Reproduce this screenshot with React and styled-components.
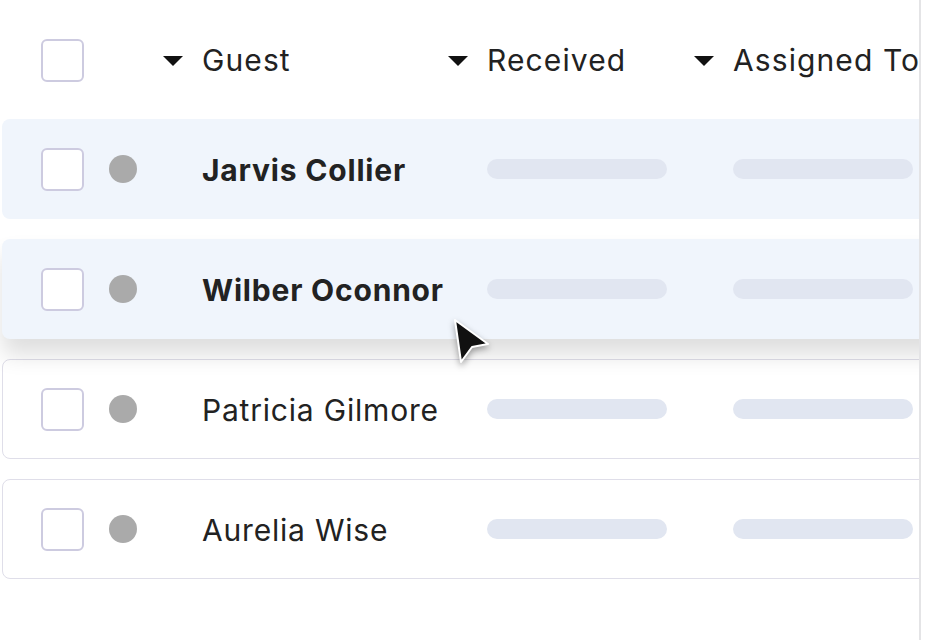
import * as React from 'react'
import styled, { createGlobalStyle } from 'styled-components'

const guests = [
    { name: 'Jarvis Collier', unread: true },
    { name: 'Wilber Oconnor', unread: true, dragging: true },
    { name: 'Patricia Gilmore' },
    { name: 'Aurelia Wise' },
]

const App = () => {
    return (
        <>
            <GlobalStyle />
            <Frame>
                <Table>
                    <HeaderRow>
                        <Checkbox />
                        <span />
                        <HeaderCell><Caret />Guest</HeaderCell>
                        <HeaderCell><Caret />Received</HeaderCell>
                        <HeaderCell><Caret />Assigned To</HeaderCell>
                    </HeaderRow>
                    {guests.map((g) => (
                        <Row key={g.name} unread={g.unread} dragging={g.dragging}>
                            <Checkbox />
                            <Dot />
                            <Name unread={g.unread}>{g.name}</Name>
                            <Skeleton />
                            <Skeleton />
                        </Row>
                    ))}
                </Table>
                <Cursor viewBox="0 0 48 56" width="48" height="56">
                    <path d="M7 6 L40 30 L24 33 L13 48 Z" fill="#111" stroke="#fff" strokeWidth="2" strokeLinejoin="round" />
                </Cursor>
            </Frame>
        </>
    )
}

export default App

const GlobalStyle = createGlobalStyle`
    body {
        margin: 0;
        background: #ffffff;
        font-family: Inter, "Noto Sans", sans-serif;
        color: #222222;
    }
`

const Frame = styled.div`
    position: relative;
    width: 921px;
    height: 640px;
    padding: 18px 0 0 2px;
    box-sizing: border-box;
    border-right: 2px solid #e4e4e6;
    overflow: hidden;
`

const Table = styled.div`
    display: flex;
    flex-direction: column;
    gap: 20px;
    width: 1040px;
`

const columns = `
    display: grid;
    grid-template-columns: 68px 93px 285px 246px 1fr;
    align-items: center;
    padding-left: 38px;
    border: 1px solid transparent;
    box-sizing: border-box;
`

const HeaderRow = styled.div`
    ${columns}
    height: 84px;
    margin-bottom: -3px;
`

const HeaderCell = styled.div`
    display: flex;
    align-items: center;
    gap: 19px;
    margin-left: -39px;
    font-size: 30px;
    font-weight: 400;
    letter-spacing: 1.1px;
    white-space: nowrap;
    color: #222222;
`

const Caret = styled.span`
    width: 0;
    height: 0;
    margin-top: 2px;
    border-left: 10px solid transparent;
    border-right: 10px solid transparent;
    border-top: 10px solid #111111;
`

const Row = styled.div`
    ${columns}
    position: relative;
    z-index: ${(p) => (p.dragging ? 2 : 1)};
    height: 100px;
    border-radius: 8px;
    background: ${(p) => (p.unread ? '#f0f5fc' : '#ffffff')};
    border-color: ${(p) => (p.unread ? 'transparent' : '#dfdee9')};
    box-shadow: ${(p) => (p.dragging ? '0 16px 22px rgba(0, 0, 0, 0.13)' : 'none')};
`

const Checkbox = styled.div`
    width: 43px;
    height: 43px;
    box-sizing: border-box;
    border: 2px solid #cdcbe0;
    border-radius: 6px;
    background: #ffffff;
`

const Dot = styled.div`
    width: 28px;
    height: 28px;
    border-radius: 50%;
    background: #aaaaaa;
`

const Name = styled.div`
    padding-top: 2px;
    font-size: 30px;
    font-weight: ${(p) => (p.unread ? 700 : 400)};
    letter-spacing: ${(p) => (p.unread ? '0.8px' : '0.8px')};
    color: #222222;
    white-space: nowrap;
`

const Skeleton = styled.div`
    width: 180px;
    height: 20px;
    border-radius: 10px;
    background: #e1e6f1;
`

const Cursor = styled.svg`
    position: absolute;
    left: 448px;
    top: 314px;
    z-index: 5;
    filter: drop-shadow(0 3px 3px rgba(0, 0, 0, 0.35));
`
